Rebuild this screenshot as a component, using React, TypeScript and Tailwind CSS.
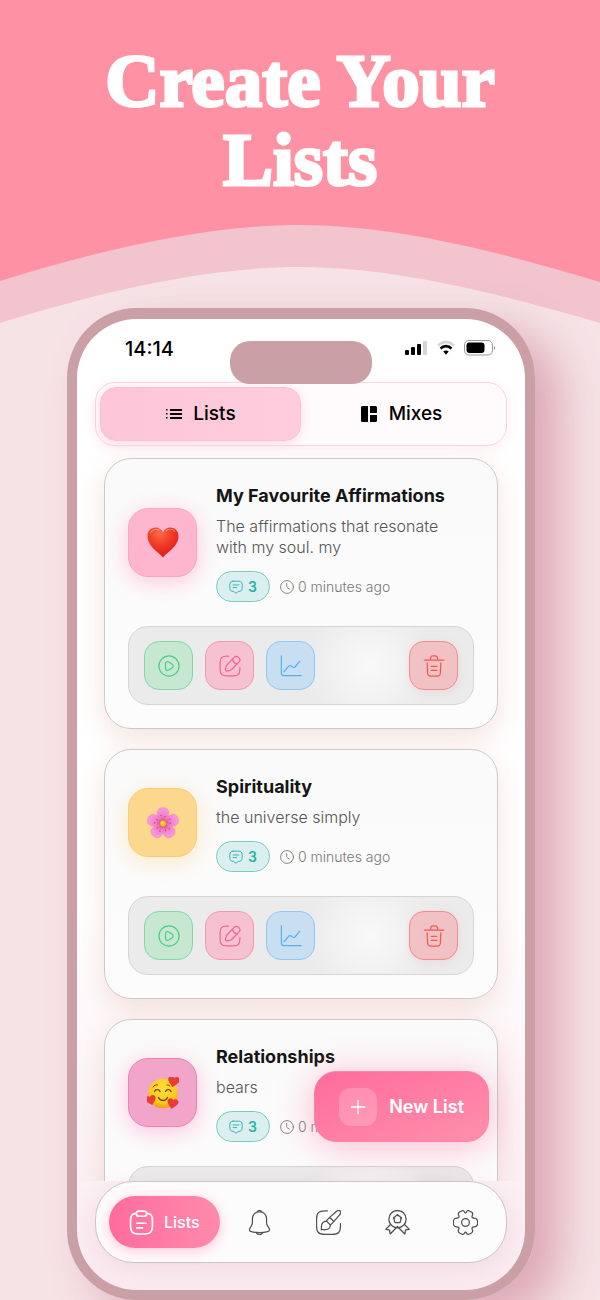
import { useState } from "react";
import type { ReactNode } from "react";

type IconProps = { className?: string };

type AffirmationList = {
  id: string;
  title: string;
  description: string;
  count: number;
  updated: string;
  emoji: ReactNode;
  tile: string;
};

function Svg({ className, width = 1.5, children }: IconProps & { width?: number; children: ReactNode }) {
  return (
    <svg
      viewBox="0 0 24 24"
      fill="none"
      stroke="currentColor"
      strokeWidth={width}
      strokeLinecap="round"
      strokeLinejoin="round"
      className={className}
      aria-hidden="true"
    >
      {children}
    </svg>
  );
}

const PlayIcon = ({ className }: IconProps) => (
  <Svg className={className} width={1.3}>
    <circle cx="12" cy="12" r="11" />
    <path d="M8.200 9.400c0-2 1.800-2.700 3.400-1.800l3.700 2.300c1.600 1 1.600 3.100 0 4.200l-3.700 2.300c-1.600.9-3.400.2-3.400-1.800z" />
  </Svg>
);

const EditIcon = ({ className }: IconProps) => (
  <Svg className={className} width={1.3}>
    <path d="M10.500 1.200H8.500C3 1.200 1.200 3 1.200 8.500v7C1.200 21 3 22.800 8.500 22.800h7c5.500 0 7.300-1.800 7.300-7.300v-2" />
    <path d="M16.300 2.800 8.700 10.700c-.6.7-1.100 1.700-1.200 2.600l-.4 2.400c-.2 1.200.5 1.900 1.700 1.700l2.400-.4c.9-.1 1.900-.6 2.600-1.200l7.700-7.700c1.600-1.600 2.200-3.400.2-5.300-2-2-3.800-1.600-5.400 0z" />
    <path d="M14.600 4.600c.7 2.500 2.500 4.400 5 5.200" />
  </Svg>
);

const ChartIcon = ({ className }: IconProps) => (
  <Svg className={className} width={1.3}>
    <path d="M1.500 1v18.500c0 2 1 3 3 3H23" />
    <path d="m4.500 18 4.800-5.600c.9-1 2.200-1 3.200-.1l.8.700c1 .9 2.300.8 3.200-.2L21.500 7" />
  </Svg>
);

const TrashIcon = ({ className }: IconProps) => (
  <Svg className={className} width={1.4}>
    <path d="M1.500 5.500h21M8 5.200l.5-2.500C8.800 1.500 9.300 1 10.800 1h2.600c1.500 0 2 .6 2.300 1.700l.5 2.500" />
    <path d="m4.500 8.500.5 10.600c.1 2.800.6 3.900 3.600 3.900h6.800c3 0 3.500-1.100 3.600-3.900l.5-10.600" />
    <path d="M9 12.500h6M9 16.800h6" />
  </Svg>
);

const MessageIcon = ({ className }: IconProps) => (
  <Svg className={className} width={1.6}>
    <path d="M7 2h10c3.500 0 5.500 2 5.500 5.500v6.500c0 3.500-2 5.500-5.500 5.500h-.8c-.5 0-1 .2-1.300.6L13 22.300c-.6.8-1.500.8-2 0l-1.900-2.200c-.3-.4-.9-.6-1.300-.6H7c-3.500 0-5.500-2-5.500-5.500V7.500C1.500 4 3.500 2 7 2z" />
    <path d="M7 8.500h10M7 13h6" />
  </Svg>
);

const ClockIcon = ({ className }: IconProps) => (
  <Svg className={className} width={1.5}>
    <circle cx="12" cy="12" r="11" />
    <path d="M11.500 6v5.200c0 .9.500 1.700 1.200 2.100l3.300 2" />
  </Svg>
);

const ClipboardIcon = ({ className }: IconProps) => (
  <Svg className={className} width={1.6}>
    <path d="M9.500 1h5C16.500 1 17 2 17 3.500S16.500 6 14.500 6h-5C7.500 6 7 5 7 3.500S7.500 1 9.500 1z" />
    <path d="M17 3.200c3.800.2 5.500 1.600 5.500 6.300v6c0 5-1.500 7.500-7.500 7.500H9c-6 0-7.500-2.500-7.500-7.500v-6c0-4.700 1.700-6.100 5.500-6.300" />
    <path d="M7.500 12.700h9M7.500 17.200h5.500" />
  </Svg>
);

const BellIcon = ({ className }: IconProps) => (
  <Svg className={className} width={1.2}>
    <path d="M12 1.500c-3.800 0-6.800 3.100-6.800 7v3.600c0 .8-.3 2-.7 2.700L2.800 17.500c-.9 1.600-.3 2.900 1.300 3.300 5.200 1.300 10.600 1.300 15.800 0 1.600-.4 2.200-1.800 1.300-3.300l-1.700-2.700c-.4-.7-.7-1.900-.7-2.700V8.500c0-3.900-3-7-6.800-7z" />
    <path d="M10.300 1.600c0-.7.7-1.100 1.700-1.100s1.700.4 1.700 1.100M8.800 21.700c.8 1.200 1.900 2 3.200 2s2.400-.8 3.200-2" />
  </Svg>
);

const BrushIcon = ({ className }: IconProps) => (
  <Svg className={className} width={1.2}>
    <path d="M11 .8H8.500C2.500.8.500 2.800.500 8.800v6.500c0 6 2 8 8 8h7c6 0 8-2 8-8V13" />
    <path d="M23.200 1c-1-1-2.800-.4-4 .6l-6.100 5.500c-1.300 1.200-2.400 2.300-3.200 3.500l3.800 3.700c1.300-.9 2.400-2 3.500-3.300l5.300-6c1-1.200 1.700-3 .7-4zM13 7.300c1.500.8 2.800 2 3.700 3.500" />
    <path d="M9.900 10.600c-2 .2-4.500 1.600-4.600 4.800-.1 1.200 0 2.400-.3 3.500 1.200-.1 2.700.2 4.300 0 3-.3 4.500-2.400 4.400-4.600" />
  </Svg>
);

const MedalIcon = ({ className }: IconProps) => (
  <Svg className={className} width={1.2}>
    <circle cx="12" cy="8.800" r="8.300" />
    <path d="m12 4.500 3.800 2.900-1.400 4.700H9.600L8.200 7.400z" />
    <path d="M12 4.500v1M15.800 7.400l-1 .5M8.200 7.400l1 .5" />
    <path d="m5 14.200-4.300 4.400 3.500.5.8 3.900 7-7.200 7 7.200.8-3.900 3.500-.5-4.300-4.400" />
  </Svg>
);

const GearIcon = ({ className }: IconProps) => (
  <Svg className={className} width={1.2}>
    <circle cx="12" cy="12" r="3.700" />
    <path d="M8.200.9c1.300-.7 2.400-.2 2.800 1 .5 1.200 1.500 1.200 2 0 .4-1.200 1.500-1.700 2.800-1l1.900 1c1.400.9 1.500 1.900.9 3.100-.8 1.700-.1 2.800 1.600 2.800 3.400 0 3.500 2.200 3.500 4.200s-.1 4.200-3.500 4.200c-1.700 0-2.400 1.100-1.600 2.800.6 1.200.5 2.200-.9 3.100l-1.900 1c-1.300.7-2.400.2-2.800-1-.5-1.200-1.500-1.200-2 0-.4 1.200-1.500 1.700-2.800 1l-1.900-1c-1.400-.9-1.500-1.900-.9-3.100.8-1.700.1-2.800-1.600-2.800C.4 16.200.3 14 .3 12s.1-4.200 3.500-4.200c1.700 0 2.400-1.100 1.600-2.800-.6-1.200-.5-2.200.9-3.100z" />
  </Svg>
);

const Heart = ({ className }: IconProps) => (
  <svg viewBox="0 0 32 32" className={className} aria-hidden="true">
    <defs>
      <radialGradient id="heart" cx=".4" cy=".2" r=".8">
        <stop offset="0" stopColor="#fb6b4b" />
        <stop offset=".5" stopColor="#f23925" />
        <stop offset="1" stopColor="#d81b1b" />
      </radialGradient>
    </defs>
    <path
      d="M16 31.500C13 27 .5 21 .5 10 .5 5 4.200 1.500 8.700 1.500c3.500 0 6.300 2 7.300 5 1-3 3.800-5 7.300-5 4.500 0 8.200 3.500 8.200 8.500C31.500 21 19 27 16 31.500z"
      fill="url(#heart)"
    />
    <path d="M3.500 7C5.500 3 10 2.500 12.500 4.500M19 5c2.500-2.500 7-2.300 9 .5" stroke="#ffa284" strokeWidth="1.200" fill="none" opacity=".7" />
  </svg>
);

const Blossom = ({ className }: IconProps) => (
  <svg viewBox="0 0 32 32" className={className} aria-hidden="true">
    <defs>
      <radialGradient id="petal" cx=".5" cy="1" r="1">
        <stop offset=".15" stopColor="#d94a91" />
        <stop offset=".5" stopColor="#f27dcb" />
        <stop offset="1" stopColor="#fb9ae2" />
      </radialGradient>
    </defs>
    {[0, 72, 144, 216, 288].map(angle => (
      <g key={angle} transform={`rotate(${angle} 16 16.500)`}>
        <path
          d="M16 17C11.500 12.500 9.500 8 10.500 4c.7-2.300 3-3.500 5.500-3.200C18.500.500 20.800 1.700 21.500 4c1 4-1 8.500-5.500 13z"
          fill="url(#petal)"
          stroke="#e978c6"
          strokeWidth=".5"
        />
        <circle cx="14" cy="8.500" r=".6" fill="#a02c70" />
        <circle cx="18" cy="9.500" r=".6" fill="#a02c70" />
      </g>
    ))}
    <circle cx="16" cy="16.500" r="3.400" fill="#f5bb2d" stroke="#d8622f" strokeWidth=".6" />
    <circle cx="15.500" cy="15.800" r="1.500" fill="#ffda57" />
  </svg>
);

const SMALL_HEART = "M0 5C-1.500 2.800-5.500.5-5.500-2.400c0-3.300 4.400-3.900 5.500-.9 1.100-3 5.500-2.400 5.500.9C5.500.5 1.500 2.800 0 5z";

const LovedFace = ({ className }: IconProps) => (
  <svg viewBox="0 0 32 32" className={className} aria-hidden="true">
    <defs>
      <radialGradient id="face" cx=".5" cy=".35" r=".65">
        <stop offset="0" stopColor="#ffe03c" />
        <stop offset=".7" stopColor="#fdc920" />
        <stop offset="1" stopColor="#ee9a16" />
      </radialGradient>
    </defs>
    <circle cx="16" cy="16.500" r="14.800" fill="url(#face)" />
    <g fill="none" stroke="#7a4208" strokeWidth="1.400" strokeLinecap="round">
      <path d="M7.500 14.500c1-2.500 4.500-2.500 5.500 0M18.500 14.500c1-2.500 4.500-2.500 5.500 0M11.500 20.500c2 4 7 4 9 0" />
      <path d="M6 10c1-1.500 2.800-2.500 4.500-2.200M20 8c1.200 0 2.300.4 3 1.200" strokeWidth="1" />
    </g>
    <g fill="#ee3a36" stroke="#cf2528" strokeWidth=".4">
      <path d={SMALL_HEART} transform="translate(26.500 5) rotate(12)" />
      <path d={SMALL_HEART} transform="translate(4 23.500) rotate(-15) scale(.9)" />
      <path d={SMALL_HEART} transform="translate(25.500 27) rotate(12) scale(.95)" />
    </g>
  </svg>
);

const lists: AffirmationList[] = [
  {
    id: "favourites",
    title: "My Favourite Affirmations",
    description: "The affirmations that resonate with my soul. my",
    count: 3,
    updated: "0 minutes ago",
    emoji: <Heart className="size-8" />,
    tile: "border-[#f9a5c4] bg-[#feb6cf] shadow-[0_5px_22px_rgba(255,130,170,0.4)]",
  },
  {
    id: "spirituality",
    title: "Spirituality",
    description: "the universe simply",
    count: 3,
    updated: "0 minutes ago",
    emoji: <Blossom className="size-8" />,
    tile: "border-[#f9cd72] bg-[#fbd88e] shadow-[0_5px_22px_rgba(255,205,120,0.4)]",
  },
  {
    id: "relationships",
    title: "Relationships",
    description: "bears",
    count: 3,
    updated: "0 minutes ago",
    emoji: <LovedFace className="size-8" />,
    tile: "border-[#ee82ae] bg-[#f2a5cb] shadow-[0_5px_22px_rgba(255,120,180,0.4)]",
  },
];

const actions = [
  { label: "Play", Icon: PlayIcon, style: "border-[#86d5a8] bg-[#c6e8d1] text-[#4dcb86]" },
  { label: "Edit", Icon: EditIcon, style: "border-[#f398b3] bg-[#f6c2d2] text-[#f2648c]" },
  { label: "Statistics", Icon: ChartIcon, style: "border-[#8fc8f5] bg-[#c8dff1] text-[#54b1f4]" },
];

const navItems = [
  { label: "Reminders", Icon: BellIcon },
  { label: "Themes", Icon: BrushIcon },
  { label: "Achievements", Icon: MedalIcon },
  { label: "Settings", Icon: GearIcon },
];

function StatusBar() {
  return (
    <div className="relative flex h-[63px] shrink-0 items-start justify-between pt-[18px] pr-[30px] pl-12">
      <span className="text-[20px] leading-6 font-medium text-black">14:14</span>
      <div className="absolute top-[22px] left-1/2 z-10 h-[43px] w-[142px] -translate-x-1/2 rounded-[20px] bg-[#cb9fa6]" />
      <svg viewBox="0 0 90 16" className="mt-[3px] h-4 w-[90px]" aria-hidden="true">
        <rect x="0" y="10" width="4" height="5" rx="1" />
        <rect x="6" y="7" width="4" height="8" rx="1" />
        <rect x="12" y="4" width="4" height="11" rx="1" />
        <rect x="18" y="1" width="4" height="14" rx="1" fill="#d5d5d5" />
        <path d="M33 5.500c4.500-4.600 11.500-4.600 16 0" fill="none" stroke="#d5d5d5" strokeWidth="2.500" />
        <path d="M35.500 8.500c3.200-3.200 7.800-3.200 11 0" fill="none" stroke="#000" strokeWidth="2.600" />
        <path d="M38.300 11.500c1.500-1.500 3.900-1.500 5.400 0L41 14.700z" />
        <rect x="59.500" y=".5" width="28" height="14.500" rx="4.500" fill="#fff" stroke="#999" />
        <rect x="61.500" y="2.500" width="18" height="10.500" rx="3" />
        <path d="M89 6v4c1.300-.8 1.300-3.200 0-4z" fill="#777" />
      </svg>
    </div>
  );
}

function ListCard({ list }: { list: AffirmationList }) {
  return (
    <article className="shrink-0 rounded-[27px] border border-[#cdc8ca] bg-linear-to-b from-[#fafafa] to-[#fdfcfc] p-[23px] shadow-[0_10px_28px_rgba(220,165,145,0.3)]">
      <div className="flex items-center gap-[19px]">
        <div className={`flex size-[69px] shrink-0 items-center justify-center rounded-[20px] border ${list.tile}`}>
          {list.emoji}
        </div>
        <div className="min-w-0 flex-1">
          <h2 className="text-[18px] leading-7 font-bold whitespace-nowrap text-[#151515]">{list.title}</h2>
          <p className="mt-1.5 max-w-60 text-base leading-[21px] font-light text-[#555]">{list.description}</p>
          <div className="mt-[13px] flex items-center gap-2.5">
            <span className="flex h-[31px] items-center gap-[5px] rounded-full border border-[#77cfc2] bg-[#dceff0] px-3 text-sm font-semibold text-[#2ab3a4]">
              <MessageIcon className="size-3.5" />
              {list.count}
            </span>
            <span className="flex items-center gap-1 text-sm font-light whitespace-nowrap text-[#777]">
              <ClockIcon className="size-3.5" />
              {list.updated}
            </span>
          </div>
        </div>
      </div>
      <div className="mt-6 flex items-center gap-3 rounded-[20px] border border-[#d5d5d5] bg-[radial-gradient(circle_at_70%_50%,#f9f9f9_0,#f4f4f4_24px,#ebebeb_64px)] px-[15px] py-3.5">
        {actions.map(({ label, Icon, style }) => (
          <button
            key={label}
            type="button"
            aria-label={label}
            className={`flex size-[49px] items-center justify-center rounded-[15px] border ${style}`}
          >
            <Icon className="size-[22px]" />
          </button>
        ))}
        <button
          type="button"
          aria-label="Delete"
          className="ml-auto flex size-[49px] items-center justify-center rounded-[15px] border border-[#f18b90] bg-[#f1c1c4] text-[#ef5a54] shadow-[0_2px_10px_rgba(240,120,120,0.15)]"
        >
          <TrashIcon className="size-[22px]" />
        </button>
      </div>
    </article>
  );
}

export default function App() {
  const [tab, setTab] = useState<"lists" | "mixes">("lists");

  const tabStyle = (active: boolean) =>
    active
      ? "bg-linear-to-r from-[#fec5d9] to-[#fecddd] shadow-[0_2px_8px_rgba(255,150,185,0.3)] border-[#fbc0d3]"
      : "border-transparent";

  return (
    <div className="flex h-screen flex-col overflow-hidden bg-[#f6e3e6] font-['Inter','Liberation_Sans',sans-serif]">
      <header className="shrink-0">
        <div className="h-[225px] bg-[#ff91a4] px-20 pt-[41px]">
          <h1 className="text-center font-['Liberation_Serif',serif] text-[75px] leading-[79px] font-bold text-white [-webkit-text-stroke:3px_white]">
            Create Your Lists
          </h1>
        </div>
        <svg viewBox="0 0 600 100" preserveAspectRatio="none" className="block h-[100px] w-full" aria-hidden="true">
          <path d="M0 0h600v98C510 72 400 42 300 42S90 70 0 98z" fill="#f2c4ce" />
          <path d="M0 0h600v57C510 30 400 0 300 0S90 28 0 56z" fill="#ff91a4" />
        </svg>
      </header>

      <div className="-mt-[17px] flex min-h-0 flex-1 justify-center pl-0.5">
        <main className="relative flex w-full max-w-[468px] flex-col rounded-[70px] border-[10px] border-t-[11px] border-[#cb9fa6] bg-linear-to-b from-white from-60% to-[#faeaf0] shadow-[26px_20px_44px_rgba(190,100,125,0.45)]">
          <StatusBar />

          <div className="mx-[18px] flex h-16 shrink-0 rounded-[20px] border border-[#fbd5e0] bg-[#fffafb] p-1 shadow-[0_3px_14px_rgba(255,170,195,0.2)]" role="tablist">
            <button
              type="button"
              role="tab"
              aria-selected={tab === "lists"}
              onClick={() => setTab("lists")}
              className={`flex flex-1 items-center justify-center gap-2.5 rounded-2xl border text-[19px] font-medium text-black ${tabStyle(tab === "lists")}`}
            >
              <svg viewBox="0 0 18 12" className="h-3 w-[18px]" aria-hidden="true">
                <path d="M5 1h12v2H5zM5 5h12v2H5zM5 9h12v2H5zM1 1h1.500v1.500H1zM1 5h1.500v1.500H1zM1 9h1.500v1.500H1z" />
              </svg>
              Lists
            </button>
            <button
              type="button"
              role="tab"
              aria-selected={tab === "mixes"}
              onClick={() => setTab("mixes")}
              className={`flex flex-1 items-center justify-center gap-3 rounded-2xl border text-[19px] font-medium text-black ${tabStyle(tab === "mixes")}`}
            >
              <svg viewBox="0 0 16 16" className="size-4" aria-hidden="true">
                <path d="M1.500 0H7v16H1.500Q0 16 0 14.500v-13Q0 0 1.500 0zM9 0h5.500Q16 0 16 1.500V7H9zM9 9h7v5.500q0 1.500-1.500 1.500H9z" />
              </svg>
              Mixes
            </button>
          </div>

          <section className="flex min-h-0 flex-1 flex-col gap-5 overflow-hidden px-[27px] pt-3">
            {lists.map(list => (
              <ListCard key={list.id} list={list} />
            ))}
          </section>

          <button
            type="button"
            className="absolute right-9 bottom-[148px] flex h-[71px] items-center gap-3 rounded-[22px] border border-[#ff82a8] bg-linear-to-br from-[#ff6b9d] to-[#ff8fab] px-6 text-[18px] font-semibold text-white shadow-[0_4px_36px_rgba(255,107,157,0.45)]"
          >
            <span className="flex size-[38px] items-center justify-center rounded-xl bg-white/20">
              <Svg className="size-4" width={2}>
                <path d="M12 2v20M2 12h20" />
              </Svg>
            </span>
            New List
          </button>

          <nav className="mx-[18px] mb-[27px] flex h-[82px] shrink-0 items-center rounded-[38px] border border-[#cbc6c9] bg-[#fdfcfc] pr-1.5 pl-[13px] shadow-[0_4px_22px_rgba(190,120,145,0.16)]">
            <a
              href="#lists"
              aria-current="page"
              className="mr-1.5 flex h-[52px] items-center gap-2.5 rounded-[26px] bg-linear-to-r from-[#ff6b9d] to-[#ff8aac] px-5 text-base font-medium text-white shadow-[0_3px_14px_rgba(255,107,157,0.35)]"
            >
              <ClipboardIcon className="size-[25px]" />
              Lists
            </a>
            {navItems.map(({ label, Icon }) => (
              <a
                key={label}
                href={`#${label.toLowerCase()}`}
                aria-label={label}
                className="flex h-[52px] flex-1 items-center justify-center text-[#505050]"
              >
                <Icon className="size-[25px]" />
              </a>
            ))}
          </nav>
        </main>
      </div>
    </div>
  );
}
